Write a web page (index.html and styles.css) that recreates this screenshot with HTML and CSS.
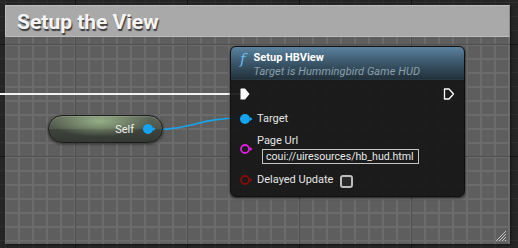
FILE: index.html
```html
<!DOCTYPE html>
<html lang="en">
<head>
  <meta charset="UTF-8">
  <title>Setup the View</title>
  <link rel="stylesheet" href="styles.css">
</head>
<body>
  <div class="graph">

    <div class="comment">
      <div class="comment-title">Setup the View</div>
      <div class="comment-body">
        <svg class="grip" width="12" height="12" viewBox="0 0 12 12">
          <path d="M11 1 L1 11 M11 4 L4 11 M11 7 L7 11 M11 10 L10 11" stroke="#c8c8c8" stroke-width="1"/>
        </svg>
      </div>
    </div>

    <svg class="wires" width="518" height="248">
      <path d="M0 94 H241" stroke="#f2f2f2" stroke-width="2" fill="none"/>
      <path d="M148 130 C 192 130, 198 118, 241 118" stroke="#1aa3e8" stroke-width="1.6" fill="none"/>
    </svg>

    <div class="self-node">
      <span class="self-label">Self</span>
      <svg class="pin" width="13" height="10" viewBox="0 0 13 10">
        <circle cx="5" cy="5" r="5" fill="#14a5f0"/>
        <path d="M10 3 L12.5 5 L10 7 Z" fill="#14a5f0"/>
      </svg>
    </div>

    <div class="node">
      <div class="node-header">
        <span class="func-icon">f</span>
        <div class="header-text">
          <div class="node-title">Setup HBView</div>
          <div class="node-sub">Target is Hummingbird Game HUD</div>
        </div>
      </div>
      <div class="node-body">
        <div class="row exec-row">
          <svg width="10" height="12" viewBox="0 0 10 12">
            <path d="M1 0.5 H5 L9.5 6 L5 11.5 H1 Q0.5 11.5 0.5 11 V1 Q0.5 0.5 1 0.5 Z" fill="#ffffff"/>
          </svg>
          <svg width="12" height="12" viewBox="0 0 12 12">
            <path d="M1.5 1 H6 L10.5 6 L6 11 H1.5 Z" fill="none" stroke="#ffffff" stroke-width="1.3" stroke-linejoin="round"/>
          </svg>
        </div>
        <div class="row pin-row target-row">
          <svg class="pin" width="13" height="10" viewBox="0 0 13 10">
            <circle cx="5" cy="5" r="5" fill="#14a5f0"/>
            <path d="M10 3 L12.5 5 L10 7 Z" fill="#14a5f0"/>
          </svg>
          <span class="pin-label">Target</span>
        </div>
        <div class="row pin-row url-row">
          <svg class="pin" width="13" height="10" viewBox="0 0 13 10">
            <circle cx="5" cy="5" r="4" fill="none" stroke="#e21ce0" stroke-width="1.8"/>
            <path d="M10 3 L12.5 5 L10 7 Z" fill="#e21ce0"/>
          </svg>
          <div class="url-field">
            <span class="pin-label">Page Url</span>
            <div class="text-box">coui://uiresources/hb_hud.html</div>
          </div>
        </div>
        <div class="row pin-row delay-row">
          <svg class="pin" width="13" height="10" viewBox="0 0 13 10">
            <circle cx="5" cy="5" r="4" fill="none" stroke="#8a0b0b" stroke-width="1.8"/>
            <path d="M10 3 L12.5 5 L10 7 Z" fill="#8a0b0b"/>
          </svg>
          <span class="pin-label">Delayed Update</span>
          <span class="checkbox"></span>
        </div>
      </div>
    </div>

  </div>
</body>
</html>
```

FILE: styles.css
```css
body {
  margin: 0;
  padding: 0;
  font-family: Roboto, "Liberation Sans", sans-serif;
  background: #262626;
  overflow: hidden;
}

/* canvas of the graph, dark grid outside the comment */
.graph {
  position: relative;
  width: 518px;
  height: 248px;
  background-color: #252525;
  background-image:
    linear-gradient(to right, #161616 1px, transparent 1px),
    linear-gradient(to bottom, #161616 1px, transparent 1px),
    linear-gradient(to right, #2e2e2e 1px, transparent 1px),
    linear-gradient(to bottom, #2e2e2e 1px, transparent 1px);
  background-size: 112px 112px, 112px 112px, 14px 14px, 14px 14px;
  background-position: 75px 44px, 75px 44px, 5px 2px, 5px 2px;
}

.comment {
  position: absolute;
  left: 5px;
  top: 5px;
  width: 505px;
  height: 239px;
  display: flex;
  flex-direction: column;
  box-shadow: 1px 1px 2px rgba(0,0,0,0.5);
}

.comment-title {
  height: 32px;
  box-sizing: border-box;
  background: #a9a9a9;
  border: 1px solid #bdbdbd;
  border-right-color: #8c8c8c;
  padding: 5px 0 0 11px;
  font-size: 21px;
  font-weight: bold;
  color: #f4f4f4;
  text-shadow: 1px 2px 1px #3c3c3c;
  line-height: 22px;
}

.comment-body {
  flex: 1;
  position: relative;
  background-color: #5e5e5e;
  background-image:
    linear-gradient(to right, #4f4f4f 1px, transparent 1px),
    linear-gradient(to bottom, #4f4f4f 1px, transparent 1px),
    linear-gradient(to right, #6b6b6b 2px, transparent 2px),
    linear-gradient(to bottom, #6b6b6b 2px, transparent 2px);
  background-size: 112px 112px, 112px 112px, 14px 14px, 14px 14px;
  background-position: 70px 7px, 70px 7px, -1px 7px, -1px 7px;
}

.grip {
  position: absolute;
  right: 3px;
  bottom: 2px;
}

.wires {
  position: absolute;
  left: 0;
  top: 0;
}

/* Self variable node */
.self-node {
  position: absolute;
  left: 48px;
  top: 115px;
  width: 115px;
  height: 28px;
  box-sizing: border-box;
  border-radius: 14px;
  border: 1px solid #1e1e1e;
  background:
    radial-gradient(ellipse 45% 60% at 45% 20%, rgba(170,200,150,0.75), rgba(170,200,150,0) 100%),
    linear-gradient(to bottom, #5c6658 0%, #4e574b 50%, #3e433c 52%, #353933 100%);
  box-shadow: 0 1px 3px rgba(0,0,0,0.6), inset 0 1px 1px rgba(255,255,255,0.15);
  display: flex;
  align-items: center;
  justify-content: flex-end;
  padding-right: 6px;
  gap: 9px;
}

.self-label {
  color: #f0f0f0;
  font-size: 11px;
}

/* function call node */
.node {
  position: absolute;
  left: 230px;
  top: 46px;
  width: 235px;
  height: 151px;
  border-radius: 6px;
  background: rgba(22,23,22,0.93);
  box-shadow: 0 1px 3px rgba(0,0,0,0.7);
  border: 1px solid #101010;
  box-sizing: border-box;
  display: flex;
  flex-direction: column;
}

.node-header {
  height: 33px;
  border-radius: 5px 5px 0 0;
  background: linear-gradient(to bottom, #5b83a0 0%, #3d5a6e 45%, #22313b 100%);
  border-bottom: 1px solid #2a3a44;
  display: flex;
  padding: 3px 0 0 9px;
  box-sizing: border-box;
  gap: 8px;
}

.func-icon {
  font-family: "DejaVu Serif", serif;
  font-style: italic;
  font-size: 15px;
  color: #6bbdf0;
  line-height: 18px;
}

.node-title {
  color: #ffffff;
  font-weight: bold;
  font-size: 11px;
  line-height: 14px;
  padding-top: 1px;
}

.node-sub {
  color: #8aa0ac;
  font-style: italic;
  font-size: 11px;
  line-height: 14px;
  letter-spacing: 0.1px;
}

.node-body {
  display: flex;
  flex-direction: column;
  padding: 4px 9px 0 9px;
}

.row {
  display: flex;
  align-items: center;
}

.exec-row {
  height: 20px;
  justify-content: space-between;
}

.pin-row {
  gap: 4px;
  color: #e6e6e6;
  font-size: 11px;
}

.target-row {
  height: 20px;
  margin-top: 5px;
}

.url-row {
  margin-top: 5px;
}

.url-field {
  display: flex;
  flex-direction: column;
}

.pin-label {
  line-height: 14px;
}

.text-box {
  margin: 1px 0 0 5px;
  height: 15px;
  width: 157px;
  box-sizing: border-box;
  border: 1px solid #c4c4c4;
  color: #e8e8e8;
  font-size: 10.6px;
  line-height: 13px;
  padding-left: 3px;
  white-space: nowrap;
  overflow: hidden;
}

.delay-row {
  height: 20px;
  margin-top: 6px;
}

.checkbox {
  width: 13px;
  height: 13px;
  box-sizing: border-box;
  border: 2px solid #bdbdbd;
  border-radius: 3px;
  background: #2a2a2a;
  margin-left: 3px;
  margin-top: 2px;
}
```
